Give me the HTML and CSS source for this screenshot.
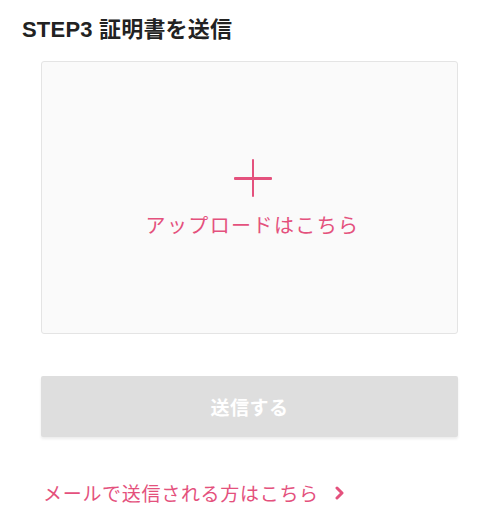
FILE: index.html
```html
<!DOCTYPE html>
<html lang="ja">
<head>
  <meta charset="UTF-8">
  <meta name="viewport" content="width=device-width, initial-scale=1.0">
  <title>STEP3 証明書を送信</title>
  <link rel="stylesheet" href="styles.css">
</head>
<body>

  <!-- Step 3 -->
  <div class="step">
    <h2 class="step-title">STEP3 証明書を送信</h2>

    <div class="step-body">
      <!-- Upload area -->
      <label class="upload-box">
        <span class="upload-plus"></span>
        <span class="upload-label">アップロードはこちら</span>
      </label>

      <button class="submit-btn" disabled>送信する</button>

      <a class="mail-link" href="#">
        <span>メールで送信される方はこちら</span>
        <svg class="chevron" width="10" height="14" viewBox="0 0 10 14">
          <polyline points="2,2 7,7 2,12" fill="none" stroke="#e4517d" stroke-width="3" stroke-linecap="round" stroke-linejoin="round"/>
        </svg>
      </a>
    </div>
  </div>

</body>
</html>
```

FILE: styles.css
```css
/* Basic Reset */
* {
  margin: 0;
  padding: 0;
  box-sizing: border-box;
}

body {
  font-family: "Liberation Sans", "Noto Sans CJK JP", sans-serif;
  background-color: #fff;
  color: #222;
}

/* Step */
.step {
  padding: 15px 0 0 22px;
}

.step-title {
  font-size: 22px;
  line-height: 30px;
  font-weight: bold;
  letter-spacing: 0.2px;
}

.step-body {
  width: 417px;
  margin: 16px 0 0 19px;
  display: flex;
  flex-direction: column;
}

/* Upload Box */
.upload-box {
  height: 273px;
  border: 1px solid #e4e4e4;
  border-radius: 3px;
  background-color: #fafafa;
  display: flex;
  flex-direction: column;
  align-items: center;
  justify-content: center;
  gap: 14px;
  padding: 3px 0 0 6px;
  cursor: pointer;
}

.upload-plus {
  position: relative;
  width: 38px;
  height: 38px;
}

.upload-plus::before,
.upload-plus::after {
  content: "";
  position: absolute;
  background-color: #e4517d;
  border-radius: 1px;
}

.upload-plus::before {
  left: 0;
  right: 0;
  top: 18px;
  height: 2.5px;
}

.upload-plus::after {
  top: 0;
  bottom: 0;
  left: 18px;
  width: 2.5px;
}

.upload-label {
  font-family: "Noto Sans CJK JP", sans-serif;
  font-size: 20px;
  line-height: 28px;
  letter-spacing: 1.4px;
  color: #e4517d;
}

/* Submit Button */
.submit-btn {
  margin-top: 42px;
  height: 61px;
  background-color: #dedede;
  color: #fff;
  border: none;
  border-radius: 2px;
  box-shadow: 0 2px 3px rgba(0, 0, 0, 0.08);
  font-family: "Noto Sans CJK JP", sans-serif;
  font-size: 19px;
  font-weight: bold;
  letter-spacing: 0.5px;
}

/* Mail Link */
.mail-link {
  margin-top: 42px;
  margin-left: 2px;
  display: flex;
  align-items: center;
  gap: 16px;
  color: #e4517d;
  text-decoration: none;
  font-family: "Noto Sans CJK JP", sans-serif;
  font-size: 19px;
  line-height: 28px;
  letter-spacing: 0.7px;
}
```
